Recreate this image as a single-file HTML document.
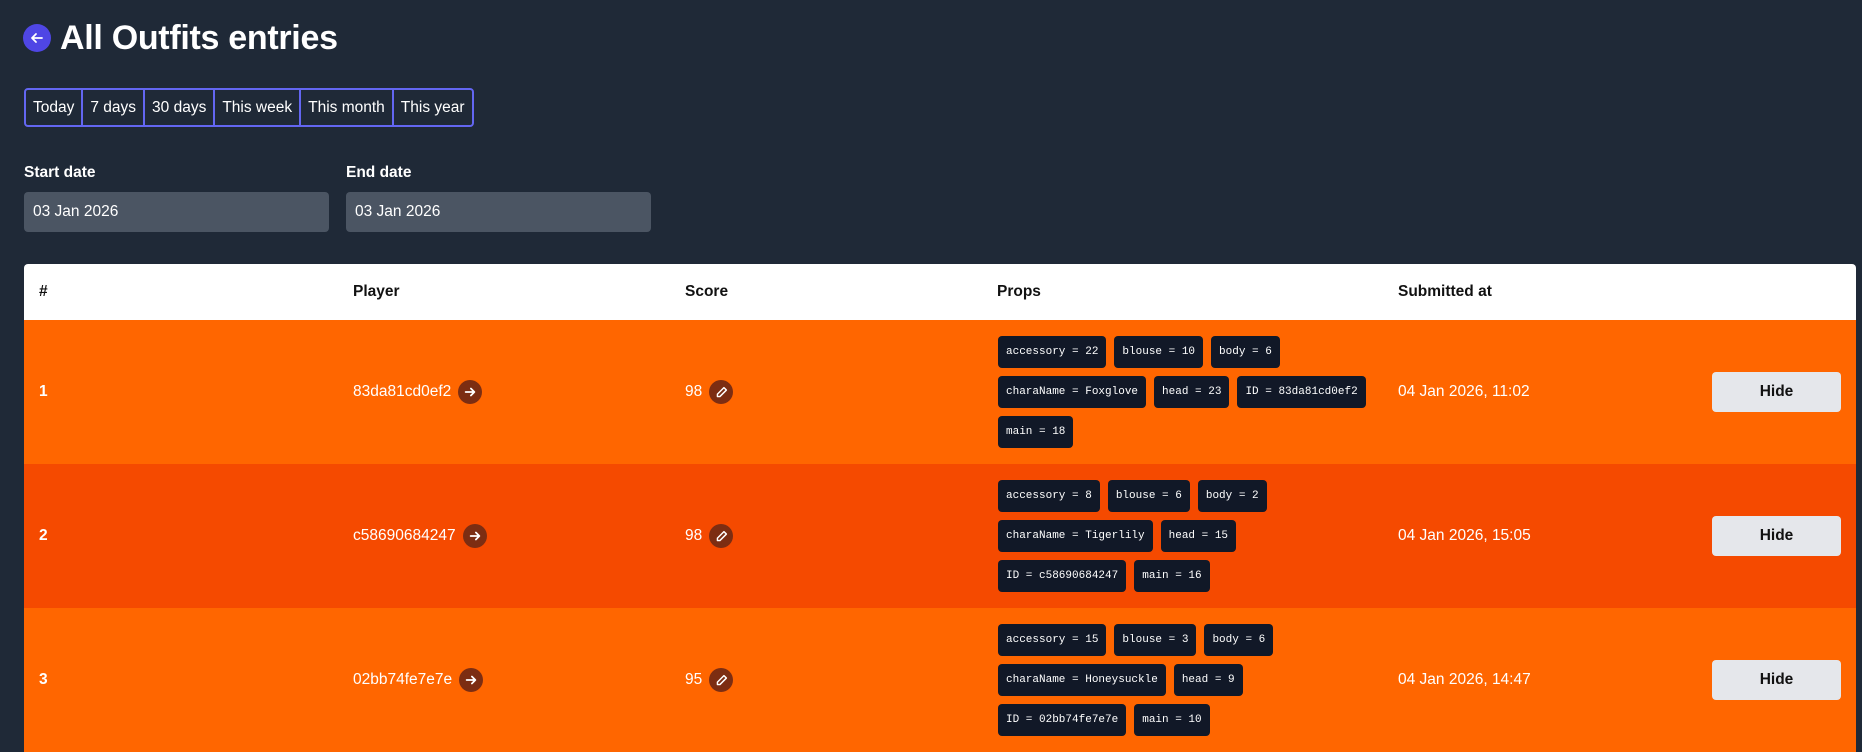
<!DOCTYPE html>
<html><head><meta charset="utf-8"><style>
*{box-sizing:border-box;margin:0;padding:0}
body{width:1862px;height:749px;overflow:hidden;background:#1f2937;font-family:"Liberation Sans",sans-serif;color:#fff;font-size:15.5px;position:relative}
.abs{position:absolute}
.back{left:23px;top:24px;width:28px;height:28px;border-radius:50%;background:#4f46e5;display:flex;align-items:center;justify-content:center}
h1{position:absolute;left:60px;top:19px;font-size:34px;font-weight:bold;letter-spacing:-0.3px}
.grp{left:24px;top:88px;height:39px;display:flex;border:2px solid #6366f1;border-radius:4px}
.grp div{padding:0 7px;line-height:35px;border-left:2px solid #6366f1;font-size:15.5px}
.grp div:first-child{border-left:none}
.lbl{font-weight:bold;font-size:15.5px;top:164px}
.inp{top:192px;height:40px;width:305px;background:#4b5563;border-radius:4px;padding-left:9px;line-height:40px;font-size:15.5px}
.table{left:24px;top:264px;width:1832px;border-radius:4px 4px 0 0;overflow:hidden}
.hd{height:56px;background:#fff;color:#111;font-weight:bold;position:relative}
.hd span,.row span.c{position:absolute;top:50%;transform:translateY(-50%)}
.row{height:144px;position:relative;background:#ff6600}
.row.alt{background:#f54a00}
.ic{display:inline-flex;width:24px;height:24px;border-radius:50%;background:#7c2d12;vertical-align:middle;margin-left:7px;align-items:center;justify-content:center}
.tags{position:absolute;left:974px;top:16px;width:420px;display:flex;flex-wrap:wrap;gap:8px}
.tag{height:32px;line-height:32px;background:#111827;border-radius:4px;padding:0 8px;font-family:"Liberation Mono",monospace;font-size:11px}
.hide{position:absolute;left:1688px;top:52px;width:129px;height:40px;background:#e5e7eb;border-radius:4px;color:#111;font-weight:bold;text-align:center;line-height:40px;font-size:15.5px}
</style></head><body>
<div class="abs back"><svg width="16" height="16" viewBox="0 0 16 16" fill="none" stroke="#fff" stroke-width="1.8" stroke-linecap="round" stroke-linejoin="round"><path d="M13 8H3M7 4L3 8l4 4"/></svg></div>
<h1>All Outfits entries</h1>
<div class="abs grp"><div>Today</div><div>7 days</div><div>30 days</div><div>This week</div><div>This month</div><div>This year</div></div>
<div class="abs lbl" style="left:24px">Start date</div>
<div class="abs lbl" style="left:346px">End date</div>
<div class="abs inp" style="left:24px">03 Jan 2026</div>
<div class="abs inp" style="left:346px">03 Jan 2026</div>
<div class="abs table">
<div class="hd"><span style="left:15px">#</span><span style="left:329px">Player</span><span style="left:661px">Score</span><span style="left:973px">Props</span><span style="left:1374px">Submitted at</span></div>
<div class="row"><span class="c" style="left:15px;font-weight:bold">1</span><span class="c" style="left:329px">83da81cd0ef2<i class="ic"><svg width="14" height="14" viewBox="0 0 16 16" fill="none" stroke="#fff" stroke-width="2" stroke-linecap="round" stroke-linejoin="round"><path d="M3 8h10M9 4l4 4-4 4"/></svg></i></span><span class="c" style="left:661px">98<i class="ic"><svg width="13" height="13" viewBox="0 0 16 16" fill="none" stroke="#fff" stroke-width="1.8" stroke-linejoin="round"><path d="M11 2l3 3-8 8H3v-3z"/></svg></i></span>
<div class="tags"><div class="tag">accessory = 22</div><div class="tag">blouse = 10</div><div class="tag">body = 6</div><div class="tag">charaName = Foxglove</div><div class="tag">head = 23</div><div class="tag">ID = 83da81cd0ef2</div><div class="tag">main = 18</div></div>
<span class="c" style="left:1374px">04 Jan 2026, 11:02</span><div class="hide">Hide</div></div>
<div class="row alt"><span class="c" style="left:15px;font-weight:bold">2</span><span class="c" style="left:329px">c58690684247<i class="ic"><svg width="14" height="14" viewBox="0 0 16 16" fill="none" stroke="#fff" stroke-width="2" stroke-linecap="round" stroke-linejoin="round"><path d="M3 8h10M9 4l4 4-4 4"/></svg></i></span><span class="c" style="left:661px">98<i class="ic"><svg width="13" height="13" viewBox="0 0 16 16" fill="none" stroke="#fff" stroke-width="1.8" stroke-linejoin="round"><path d="M11 2l3 3-8 8H3v-3z"/></svg></i></span>
<div class="tags"><div class="tag">accessory = 8</div><div class="tag">blouse = 6</div><div class="tag">body = 2</div><div class="tag">charaName = Tigerlily</div><div class="tag">head = 15</div><div class="tag" style="margin-right:200px">ID = c58690684247</div><div class="tag" style="margin-left:-200px">main = 16</div></div>
<span class="c" style="left:1374px">04 Jan 2026, 15:05</span><div class="hide">Hide</div></div>
<div class="row"><span class="c" style="left:15px;font-weight:bold">3</span><span class="c" style="left:329px">02bb74fe7e7e<i class="ic"><svg width="14" height="14" viewBox="0 0 16 16" fill="none" stroke="#fff" stroke-width="2" stroke-linecap="round" stroke-linejoin="round"><path d="M3 8h10M9 4l4 4-4 4"/></svg></i></span><span class="c" style="left:661px">95<i class="ic"><svg width="13" height="13" viewBox="0 0 16 16" fill="none" stroke="#fff" stroke-width="1.8" stroke-linejoin="round"><path d="M11 2l3 3-8 8H3v-3z"/></svg></i></span>
<div class="tags" style="width:300px"><div class="tag">accessory = 15</div><div class="tag">blouse = 3</div><div class="tag">body = 6</div><div class="tag">charaName = Honeysuckle</div><div class="tag">head = 9</div><div class="tag">ID = 02bb74fe7e7e</div><div class="tag">main = 10</div></div>
<span class="c" style="left:1374px">04 Jan 2026, 14:47</span><div class="hide">Hide</div></div>
</div>
</body></html>
